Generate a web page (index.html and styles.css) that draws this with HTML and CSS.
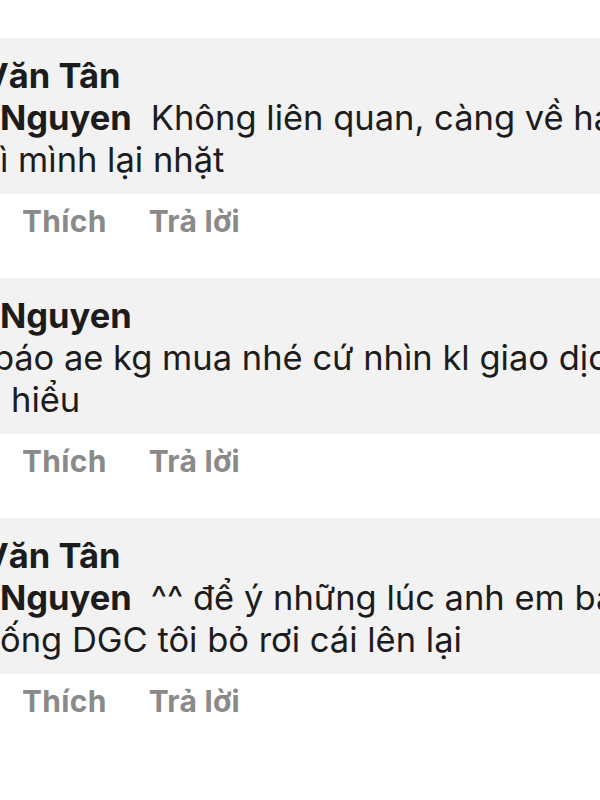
FILE: index.html
```html
<!DOCTYPE html>
<html lang="vi">
<head>
    <meta charset="UTF-8">
    <meta name="viewport" content="width=device-width, initial-scale=1.0">
    <title>Bình luận</title>
    <link rel="stylesheet" href="styles.css">
</head>
<body>
    <div class="thread">
        <div class="comment">
            <div class="bubble">
                <div class="line name"><span class="cut-v">V</span>ăn Tân</div>
                <div class="line"><span class="name">Nguyen</span><span class="msg">Không liên quan, càng về hải</span></div>
                <div class="line">ì mình lại nhặt</div>
            </div>
            <div class="actions">
                <span>Thích</span>
                <span>Trả lời</span>
            </div>
        </div>

        <div class="comment">
            <div class="bubble">
                <div class="line name">Nguyen</div>
                <div class="line"><span class="cut-b">b</span>áo ae kg mua nhé cứ nhìn kl giao dịch</div>
                <div class="line indent">hiểu</div>
            </div>
            <div class="actions">
                <span>Thích</span>
                <span>Trả lời</span>
            </div>
        </div>

        <div class="comment">
            <div class="bubble">
                <div class="line name"><span class="cut-v">V</span>ăn Tân</div>
                <div class="line"><span class="name">Nguyen</span><span class="msg">^^ để ý những lúc anh em bán</span></div>
                <div class="line">ống DGC tôi bỏ rơi cái lên lại</div>
            </div>
            <div class="actions">
                <span>Thích</span>
                <span>Trả lời</span>
            </div>
        </div>
    </div>
</body>
</html>
```

FILE: styles.css
```css
html, body {
    margin: 0;
    padding: 0;
    background: #fff;
    overflow: hidden;
}
body {
    font-family: Inter, "Noto Sans", "DejaVu Sans", sans-serif;
    color: #1c1c1c;
    width: 600px;
}
.thread {
    padding-top: 38px;
}
.comment {
    height: 240px;
}
.bubble {
    background: #f2f2f2;
    height: 156px;
    box-sizing: border-box;
    padding: 17px 0 0 0;
    font-size: 34.5px;
    line-height: 42px;
    overflow: hidden;
}
.line {
    white-space: nowrap;
}
.name {
    font-weight: 700;
}
.msg {
    margin-left: 19px;
}
.cut-v {
    display: inline-block;
    margin-left: -17px;
}
.cut-b {
    display: inline-block;
    margin-left: -7px;
}
.indent {
    padding-left: 11px;
}
.actions {
    display: flex;
    gap: 42px;
    padding: 7px 0 0 22px;
    font-size: 30px;
    line-height: 40px;
    font-weight: 700;
    letter-spacing: 0.3px;
    color: #8a8a8a;
}
```
